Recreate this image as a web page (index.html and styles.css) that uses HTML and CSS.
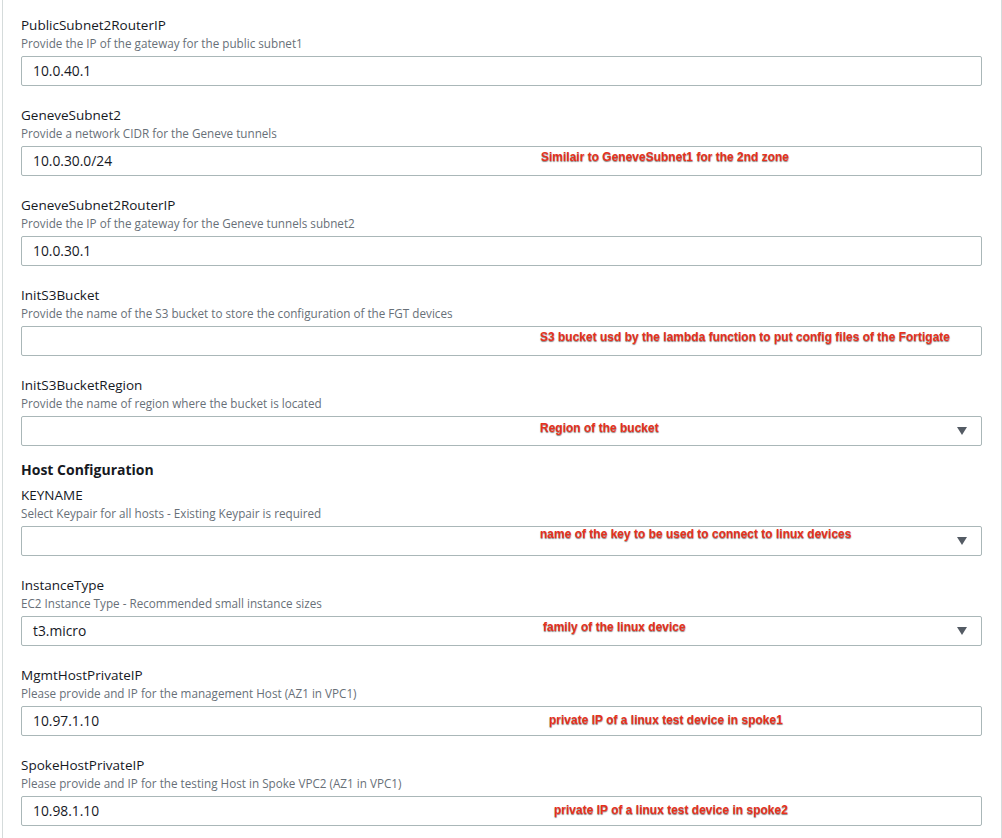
FILE: index.html
```html
<!DOCTYPE html>
<html>
<head>
<meta charset="utf-8">
<link rel="stylesheet" href="styles.css">
</head>
<body>
<div class="panel">
  <div class="field">
    <div class="label">PublicSubnet2RouterIP</div>
    <div class="desc">Provide the IP of the gateway for the public subnet1</div>
    <div class="input">10.0.40.1</div>
  </div>
  <div class="field">
    <div class="label">GeneveSubnet2</div>
    <div class="desc">Provide a network CIDR for the Geneve tunnels</div>
    <div class="input">10.0.30.0/24<span class="note note-a">Similair to GeneveSubnet1 for the 2nd zone</span></div>
  </div>
  <div class="field">
    <div class="label">GeneveSubnet2RouterIP</div>
    <div class="desc">Provide the IP of the gateway for the Geneve tunnels subnet2</div>
    <div class="input">10.0.30.1</div>
  </div>
  <div class="field">
    <div class="label">InitS3Bucket</div>
    <div class="desc">Provide the name of the S3 bucket to store the configuration of the FGT devices</div>
    <div class="input"><span class="note note-b">S3 bucket usd by the lambda function to put config files of the Fortigate</span></div>
  </div>
  <div class="field">
    <div class="label">InitS3BucketRegion</div>
    <div class="desc">Provide the name of region where the bucket is located</div>
    <div class="input select"><span class="note note-c">Region of the bucket</span><span class="caret"></span></div>
  </div>
  <h3 class="section">Host Configuration</h3>
  <div class="field">
    <div class="label">KEYNAME</div>
    <div class="desc">Select Keypair for all hosts - Existing Keypair is required</div>
    <div class="input select"><span class="note note-d">name of the key to be used to connect to linux devices</span><span class="caret"></span></div>
  </div>
  <div class="field">
    <div class="label">InstanceType</div>
    <div class="desc">EC2 Instance Type - Recommended small instance sizes</div>
    <div class="input select">t3.micro<span class="note note-e">family of the linux device</span><span class="caret"></span></div>
  </div>
  <div class="field">
    <div class="label">MgmtHostPrivateIP</div>
    <div class="desc">Please provide and IP for the management Host (AZ1 in VPC1)</div>
    <div class="input">10.97.1.10<span class="note note-f">private IP of a linux test device in spoke1</span></div>
  </div>
  <div class="field">
    <div class="label">SpokeHostPrivateIP</div>
    <div class="desc">Please provide and IP for the testing Host in Spoke VPC2 (AZ1 in VPC1)</div>
    <div class="input">10.98.1.10<span class="note note-g">private IP of a linux test device in spoke2</span></div>
  </div>
</div>
</body>
</html>
```
FILE: styles.css
```css
html, body {
  margin: 0;
  padding: 0;
  background: #ffffff;
}
body {
  font-family: "Open Sans", "Noto Sans", sans-serif;
  color: #16191f;
  overflow: hidden;
}
.panel {
  margin-left: 2px;
  width: 961px;
  height: 838px;
  border-left: 1px solid #d5dbdb;
  border-right: 1px solid #d5dbdb;
  padding: 15px 19px 0 18px;
  box-sizing: content-box;
}
.field {
  margin-bottom: 19px;
}
.label {
  font-size: 13.5px;
  line-height: 20px;
  color: #16191f;
}
.desc {
  font-size: 11.7px;
  line-height: 16px;
  color: #687078;
  margin-bottom: 5px;
}
.input {
  position: relative;
  height: 30px;
  box-sizing: border-box;
  border: 1px solid #aab7b8;
  border-radius: 2px;
  padding: 0 11px;
  font-size: 13.8px;
  line-height: 28px;
  color: #16191f;
}
.caret {
  position: absolute;
  right: 14px;
  top: 10px;
  width: 0;
  height: 0;
  border-left: 5px solid transparent;
  border-right: 5px solid transparent;
  border-top: 8px solid #545b64;
}
.section {
  margin: -5px 0 5px;
  font-size: 14px;
  line-height: 20px;
  font-weight: 700;
  color: #16191f;
}
.note {
  position: absolute;
  font-family: "Liberation Sans", Arial, sans-serif;
  font-weight: 700;
  font-size: 12px;
  line-height: 14px;
  color: #e8311c;
  white-space: nowrap;
  text-shadow: 0 1px 1px rgba(60, 40, 40, 0.6), 0 0 2px #fff;
}
.note-a { left: 519px; top: 3px; }
.note-b { left: 518px; top: 3px; }
.note-c { left: 518px; top: 4px; }
.note-d { left: 518px; top: 0px; }
.note-e { left: 521px; top: 3px; }
.note-f { left: 527px; top: 6px; }
.note-g { left: 532px; top: 6px; }
```
